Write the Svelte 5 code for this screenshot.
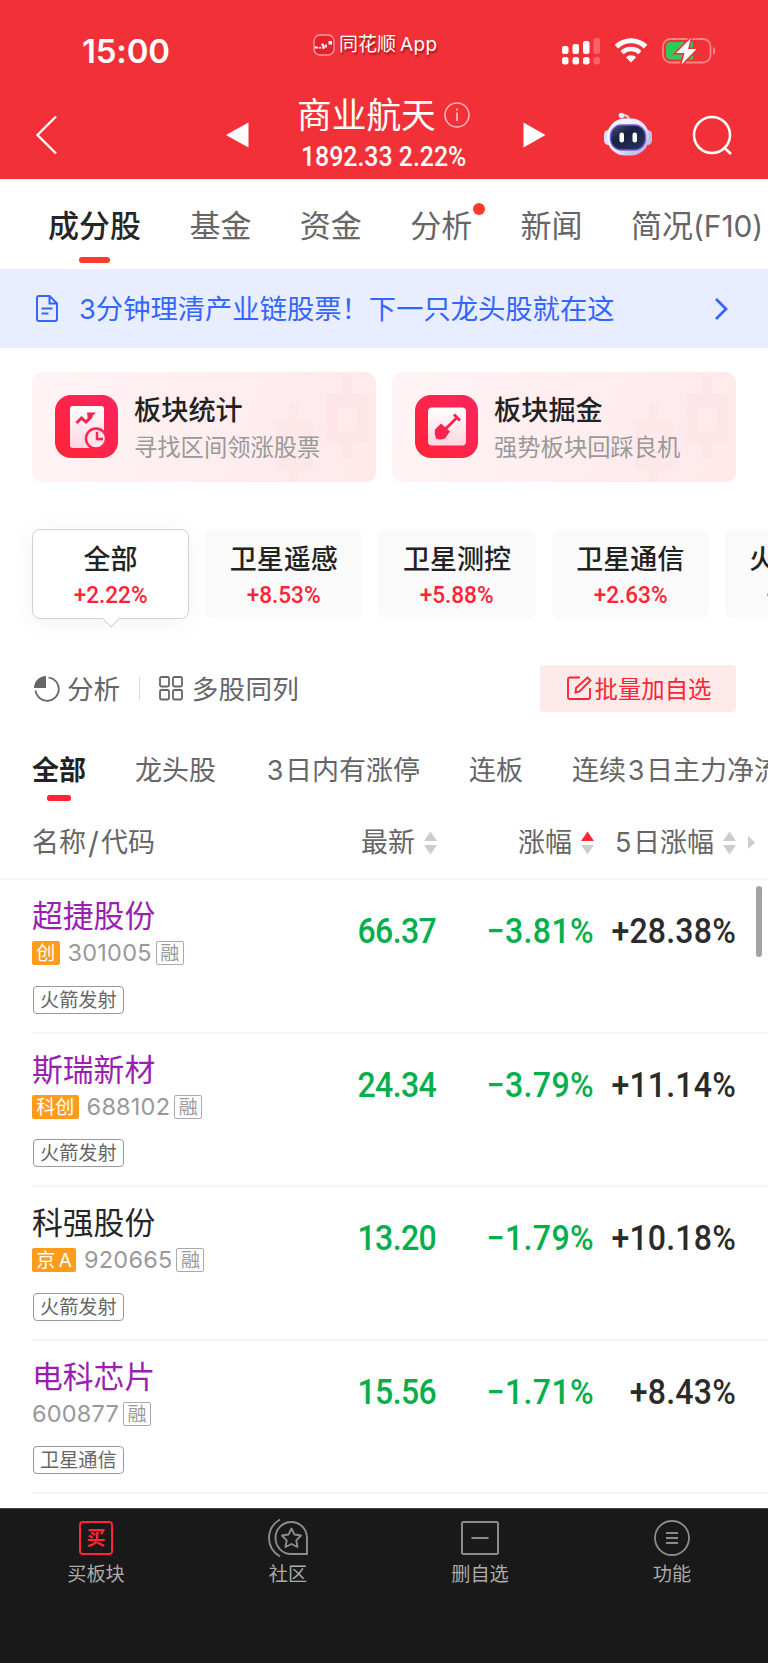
<script>
    const tabs = [
        { label: '成分股', active: true },
        { label: '基金' },
        { label: '资金' },
        { label: '分析', dot: true },
        { label: '新闻' },
        { label: '简况', suffix: '(F10)' },
    ];

    const chips = [
        { name: '全部', change: '+2.22%' },
        { name: '卫星遥感', change: '+8.53%' },
        { name: '卫星测控', change: '+5.88%' },
        { name: '卫星通信', change: '+2.63%' },
        { name: '火箭发射', change: '+1.96%' },
    ];
    let activeChip = 0;

    const filters = ['全部', '龙头股', '3日内有涨停', '连板', '连续3日主力净流入'];
    let activeFilter = 0;

    // digits get some air around them when they sit between characters
    const splitDigits = s => s.split(/(\d)/).filter(Boolean);

    const columns = [
        { label: '最新', cls: 'last' },
        { label: '涨幅', cls: 'pct', sort: 'asc' },
        { label: '5日涨幅', cls: 'five' },
    ];

    const stocks = [
        { name: '超捷股份', seen: true, board: '创', code: '301005', tag: '火箭发射', last: '66.37', pct: '−3.81%', five: '+28.38%' },
        { name: '斯瑞新材', seen: true, board: '科创', code: '688102', tag: '火箭发射', last: '24.34', pct: '−3.79%', five: '+11.14%' },
        { name: '科强股份', seen: false, board: '京 A', code: '920665', tag: '火箭发射', last: '13.20', pct: '−1.79%', five: '+10.18%' },
        { name: '电科芯片', seen: true, board: '', code: '600877', tag: '卫星通信', last: '15.56', pct: '−1.71%', five: '+8.43%' },
    ];
</script>

<div class="page">
    <header>
        <div class="status">
            <div class="clock">15:00</div>
            <div class="brand">
                <svg width="22" height="22" viewBox="0 0 22 22">
                    <rect x="1" y="1" width="20" height="20" rx="6" fill="#e5222b" stroke="#ff9a9d" stroke-width="1.3" />
                    <path d="M1.500 13.500h3.500M6 14l2-.5M8.500 11l2-1M13 10.500v3M10.500 12v3" fill="none" stroke="#fff" stroke-width="1.800" />
                    <path d="M15.500 7h3.500v3.500h-3.500zM9.500 11h2v3h-2z" fill="#fff" />
                </svg>
                <span>同花顺<b>App</b></span>
            </div>
            <svg class="signal" width="39" height="28" viewBox="0 0 39 28" fill="#fff">
                <rect x="0" y="9" width="6.500" height="8" rx="2" />
                <rect x="10.500" y="7" width="6.500" height="10" rx="2" />
                <rect x="21" y="4" width="6.500" height="13" rx="2" />
                <rect x="31.500" y="1" width="6.500" height="16" rx="2" opacity=".25" />
                <rect x="0" y="20" width="6.500" height="7.500" rx="2.500" />
                <rect x="10.500" y="20" width="6.500" height="7.500" rx="2.500" />
                <rect x="21" y="20" width="6.500" height="7.500" rx="2.500" />
                <rect x="31.500" y="20" width="6.500" height="7.500" rx="2.500" opacity=".25" />
            </svg>
            <svg class="wifi" width="34" height="26" viewBox="0 0 34 26">
                <path d="M2.400 8.600a21 21 0 0 1 29.200 0" fill="none" stroke="#fff" stroke-width="5" />
                <path d="M8 14.600a13 13 0 0 1 18 0" fill="none" stroke="#fff" stroke-width="4.300" />
                <path d="M11.800 19.300a7.600 7.600 0 0 1 10.400 0L17 24.600z" fill="#fff" />
            </svg>
            <svg class="battery" width="55" height="28" viewBox="0 0 55 28">
                <rect x="1" y="2" width="47.500" height="23.500" rx="7.500" fill="none" stroke="#f98589" stroke-width="1.800" />
                <path d="M51 10c3 1 3 7 0 8z" fill="#f98589" />
                <path d="M9 5h22v17.500H9q-5 0-5-5V10q0-5 5-5z" fill="#34c759" />
                <path d="M29 1L14 16h8.500l-3 11.500L34.500 12H26z" fill="#fff" stroke="#f23037" stroke-width="3" paint-order="stroke" />
            </svg>
        </div>

        <div class="titlebar">
            <svg class="back" width="24" height="42" viewBox="0 0 24 42"><path d="M21 2.500L2.500 21 21 39.500" fill="none" stroke="#fff" stroke-width="2.300" /></svg>
            <svg class="prev" width="23" height="26" viewBox="0 0 23 26"><path d="M0 13L22.500 .5v25z" fill="#fff" /></svg>
            <div class="title">
                <h1>商业航天
                    <svg width="26" height="26" viewBox="0 0 26 26" fill="none" stroke="#ffb3b5" stroke-width="1.600">
                        <circle cx="13" cy="13" r="12" />
                        <path d="M13 10.500V19M13 6.500v2" stroke-width="1.900" />
                    </svg>
                </h1>
                <p>1892.33 2.22%</p>
            </div>
            <svg class="next" width="23" height="26" viewBox="0 0 23 26"><path d="M22.500 13L.5 .5v25z" fill="#fff" /></svg>
            <svg class="robot" width="48" height="44" viewBox="0 0 48 44">
                <defs>
                    <linearGradient id="shell" x1="0" y1="0" x2="1" y2="1">
                        <stop offset="0" stop-color="#fff" />
                        <stop offset=".55" stop-color="#e6e5fa" />
                        <stop offset="1" stop-color="#aaa5dc" />
                    </linearGradient>
                    <linearGradient id="visor" x1="0" y1="0" x2="1" y2="1">
                        <stop offset="0" stop-color="#42516e" />
                        <stop offset=".4" stop-color="#18213f" />
                        <stop offset="1" stop-color="#28345e" />
                    </linearGradient>
                </defs>
                <path d="M18 3.500q6-1 7 4" fill="none" stroke="#d7dcf5" stroke-width="2" />
                <circle cx="17.500" cy="3.500" r="2.800" fill="#e4ecff" />
                <rect x="0" y="18" width="9" height="15" rx="4.500" fill="#dedff5" />
                <rect x="39" y="18" width="9" height="15" rx="4.500" fill="#bfbfe8" />
                <rect x="3" y="6.500" width="42" height="37" rx="18" fill="url(#shell)" />
                <rect x="6.500" y="13" width="35" height="25" rx="11" fill="url(#visor)" stroke="#7359df" stroke-width="1.300" />
                <rect x="15.500" y="20.500" width="4.500" height="10" rx="2.200" fill="#fff" />
                <rect x="28.500" y="20.500" width="4.500" height="10" rx="2.200" fill="#fff" />
            </svg>
            <svg class="search" width="41" height="41" viewBox="0 0 41 41" fill="none" stroke="#fff" stroke-width="2.600">
                <circle cx="20" cy="20" r="18" />
                <path d="M31.500 32l7.500 7" />
            </svg>
        </div>
    </header>

    <nav class="tabs">
        {#each tabs as tab}
            <span class="tab" class:active={tab.active}>{tab.label}{#if tab.suffix}<i>{tab.suffix}</i>{/if}{#if tab.dot}<em></em>{/if}</span>
        {/each}
    </nav>

    <div class="banner">
        <svg width="22" height="27" viewBox="0 0 22 27" fill="none" stroke="#3366ff" stroke-width="2">
            <path d="M3 1h10.500L21 8.500V24q0 2-2 2H3q-2 0-2-2V3q0-2 2-2zM13.500 1v7.500H21M5.500 13.500h11M5.500 18.500h7" />
        </svg>
        <span>3分钟理清产业链股票！下一只龙头股就在这</span>
        <svg class="arrow" width="15" height="24" viewBox="0 0 15 24"><path d="M2 2l10 10L2 22" fill="none" stroke="#3366ff" stroke-width="2.800" /></svg>
    </div>

    <div class="cards">
        {#each ['统计', '掘金'] as kind, i}
            <div class="card">
                <svg class="candles" width="104" height="110" viewBox="0 0 104 110" fill="#fcdadd">
                    <path d="M70 4h10v18h16v48H80v16H70V70H55V22h15zM66 36v23h19V36z" fill-rule="evenodd" opacity=".32" />
                    <path d="M17 31h10v17h14v49H27v13H17V97H3V48h14zM13 62v22h18V62z" fill-rule="evenodd" opacity=".2" />
                </svg>
                <svg class="badge" width="64" height="64" viewBox="0 0 64 64">
                    <defs>
                        <linearGradient id="red{i}" x1="1" y1="0" x2="0" y2="1">
                            <stop offset="0" stop-color="#fa2460" />
                            <stop offset="1" stop-color="#ff2436" />
                        </linearGradient>
                        <linearGradient id="paper{i}" x1="0" y1="0" x2="0" y2="1">
                            <stop offset="0" stop-color="#fff" />
                            <stop offset="1" stop-color="#ffd6df" />
                        </linearGradient>
                    </defs>
                    <rect width="63" height="63" rx="16" fill="url(#red{i})" />
                    {#if i === 0}
                        <rect x="15" y="11" width="34" height="42" rx="3" fill="url(#paper{i})" />
                        <path d="M21.500 28l5-5 4.500 4 6-6" fill="none" stroke="#fa2450" stroke-width="3" />
                        <path d="M32 17.500h9l-8 8z" fill="#fa2450" />
                        <circle cx="41" cy="43.500" r="10" fill="#ffe4ea" stroke="#fb2750" stroke-width="2.400" />
                        <path d="M42 37v7h6" fill="none" stroke="#fb2750" stroke-width="2.400" />
                    {:else}
                        <rect x="13" y="12.500" width="38" height="38" rx="4" fill="url(#paper{i})" />
                        <path d="M31 33.500l11-11M39 19.500l6 6" fill="none" stroke="#fa2450" stroke-width="3" />
                        <path d="M26 28.500l9 8-5 7q-5 2-9 0-2-4-1-9z" fill="#fa2450" />
                    {/if}
                </svg>
                <div>
                    <h2>板块{kind}</h2>
                    <p>{i === 0 ? '寻找区间领涨股票' : '强势板块回踩良机'}</p>
                </div>
            </div>
        {/each}
    </div>

    <div class="chips">
        {#each chips as chip, i}
            <div class="chip" class:selected={i === activeChip} on:click={() => activeChip = i} role="presentation">
                <strong>{chip.name}</strong>
                <span>{chip.change}</span>
            </div>
        {/each}
    </div>

    <div class="tools">
        <svg width="26" height="26" viewBox="0 0 26 26">
            <path d="M12 0v12H0A12 12 0 0 1 12 0z" fill="#666" />
            <path d="M14.500 1.500a11.700 11.700 0 1 1-13 13" fill="none" stroke="#666" stroke-width="1.700" />
        </svg>
        <span class="t1">分析</span>
        <i></i>
        <svg width="24" height="25" viewBox="0 0 24 25" fill="none" stroke="#666" stroke-width="1.800">
            <rect x="1" y="1" width="9" height="9.500" rx="1.500" />
            <rect x="14" y="1" width="9" height="9.500" rx="1.500" />
            <rect x="1" y="14" width="9" height="9.500" rx="1.500" />
            <rect x="14" y="14" width="9" height="9.500" rx="1.500" />
        </svg>
        <span class="t2">多股同列</span>
        <button>
            <svg width="25" height="25" viewBox="0 0 25 25" fill="none" stroke="#ff2436" stroke-width="1.900">
                <path d="M13 1.500H3q-2 0-2 2V21q0 2 2 2h18q2 0 2-2v-9" />
                <path d="M8.500 16.500l.5-4.500L20.500 1.500l3 3L12.500 15.500z" />
            </svg><span>批量加自选</span>
        </button>
    </div>

    <div class="filters">
        {#each filters as filter, i}
            <span class:active={i === activeFilter} on:click={() => activeFilter = i} role="presentation">{#each splitDigits(filter) as part}{#if /\d/.test(part)}<b>{part}</b>{:else}{part}{/if}{/each}</span>
        {/each}
    </div>

    <div class="thead">
        <span class="name">名称<i>/</i>代码</span>
        {#each columns as col}
            <span class={col.cls}>{#each splitDigits(col.label) as part}{#if /\d/.test(part)}<b>{part}</b>{:else}{part}{/if}{/each}
                <svg width="13" height="24" viewBox="0 0 13 24" fill="#ccc">
                    <path class:up={col.sort === 'asc'} d="M6.500 .5L13 10H0z" />
                    <path d="M6.500 23.500L0 14h13z" />
                </svg>
            </span>
        {/each}
        <svg class="more" width="7" height="13" viewBox="0 0 7 13"><path d="M0 0l7 6.500L0 13z" fill="#ccc" /></svg>
    </div>

    <div class="list">
        {#each stocks as stock (stock.code)}
            <div class="row">
                <div class="name">
                    <div class="title" class:seen={stock.seen}>{stock.name}</div>
                    <div class="meta">
                        {#if stock.board}<span class="board">{stock.board}</span>{/if}
                        <span class="code">{stock.code}</span>
                        <span class="margin">融</span>
                    </div>
                    <span class="tag">{stock.tag}</span>
                </div>
                <span class="num last">{stock.last}</span>
                <span class="num pct">{stock.pct}</span>
                <span class="num five">{stock.five}</span>
            </div>
        {/each}
        <div class="scrollbar"></div>
    </div>

    <footer>
        <div>
            <svg width="40" height="40" viewBox="0 0 40 40">
                <rect x="4" y="4" width="32" height="32" rx="3" fill="none" stroke="#ff2436" stroke-width="2" />
                <text x="20" y="27" text-anchor="middle" fill="#ff2436">买</text>
            </svg>
            买板块
        </div>
        <div>
            <svg width="40" height="40" viewBox="0 0 40 40" fill="none" stroke="#8c8c8c" stroke-width="1.900">
                <path d="M23 4A15.500 16 0 0 0 23 36h16V20A15.500 16 0 0 0 23 4z" />
                <path d="M12 1.500Q1 8 1 20t11 18.500" />
                <path d="M23.500 10.500l3 6 6.500 1-4.700 4.800 1.200 6.700-6-3-6 3 1.200-6.700-4.700-4.800 6.500-1z" stroke-linejoin="round" />
            </svg>
            社区
        </div>
        <div>
            <svg width="40" height="40" viewBox="0 0 40 40" fill="none" stroke="#8c8c8c" stroke-width="2">
                <rect x="2" y="4" width="36" height="32" rx="1.500" />
                <path d="M11.500 20h17" />
            </svg>
            删自选
        </div>
        <div>
            <svg width="40" height="40" viewBox="0 0 40 40" fill="none" stroke="#8c8c8c" stroke-width="1.800">
                <circle cx="20" cy="20" r="17" />
                <path d="M14 15h12M14 20h12M14 25h12" />
            </svg>
            功能
        </div>
    </footer>
</div>

<style>
    :global(body) {
        background: #fff;
    }

    .page {
        width: 768px;
        height: 1663px;
        overflow: hidden;
        display: flex;
        flex-direction: column;
        font-family: Inter, "Noto Sans CJK SC", sans-serif;
        color: #666;
        white-space: nowrap;
    }

    svg {
        display: block;
        flex: none;
    }

    h1, h2, p {
        margin: 0;
        font-weight: 400;
    }

    b, i, em {
        font-weight: inherit;
        font-style: normal;
    }

    header {
        height: 179px;
        flex: none;
        background: #f23037;
        color: #fff;
    }

    .status {
        position: relative;
        height: 90px;
        display: flex;
        align-items: flex-start;
        padding-left: 82px;
    }

    .clock {
        width: 480px;
        margin-top: 31px;
        font-size: 33px;
        line-height: 41px;
        font-weight: 600;
        letter-spacing: -0.2px;
    }

    .brand {
        position: absolute;
        left: 313px;
        top: 32px;
        display: flex;
        align-items: center;
        gap: 4px;
        font-size: 19px;
        line-height: 24px;
        text-shadow: 1px 2px 2px rgba(90, 0, 0, 0.6);
    }

    .brand span {
        padding-top: 1px;
    }

    .brand b {
        margin-left: 4px;
        letter-spacing: 0.4px;
    }

    .signal {
        margin-top: 37px;
    }

    .wifi {
        margin: 38px 0 0 13px;
    }

    .battery {
        margin: 37px 0 0 14px;
    }

    .titlebar {
        height: 89px;
        display: flex;
        align-items: flex-start;
    }

    .back { margin: 24px 0 0 35px; }
    .prev { margin: 32px 0 0 167px; }
    .next { margin: 32px 0 0 22px; }
    .robot { margin: 22px 0 0 58px; }
    .search { margin: 25px 0 0 40px; }

    .titlebar .title {
        width: 204px;
        margin-left: 48px;
    }

    h1 {
        display: flex;
        align-items: center;
        gap: 8px;
        font-size: 34.7px;
        line-height: 50px;
    }

    .title p {
        width: max-content;
        margin-top: -1px;
        padding-left: 4px;
        font: 500 27px/36px Roboto, sans-serif;
        transform: scaleX(0.92);
        transform-origin: 4px 50%;
    }

    .tabs {
        height: 90px;
        flex: none;
        display: flex;
        gap: 48.4px;
        padding-left: 48px;
        font-size: 31px;
        line-height: 92px;
        border-top: 1px solid #eef4f7;
        box-sizing: border-box;
    }

    .tab {
        position: relative;
    }

    .tab i {
        font-size: 29.8px;
    }

    .tab em {
        position: absolute;
        right: -12.5px;
        top: 23px;
        width: 12px;
        height: 12px;
        border-radius: 50%;
        background: #ff3b30;
    }

    .tab.active {
        color: #262626;
        font-weight: 500;
    }

    .tab.active::after {
        content: "";
        position: absolute;
        left: 31px;
        top: 77px;
        width: 31px;
        height: 6px;
        border-radius: 3px;
        background: #ff3b30;
    }

    .banner {
        height: 79px;
        flex: none;
        display: flex;
        align-items: center;
        padding: 0 39px 0 36px;
        background: #e8eeff;
        color: #3366ff;
        font-size: 27.3px;
    }

    .banner span {
        margin-left: 21px;
        padding-bottom: 3px;
    }

    .arrow {
        margin-left: auto;
    }

    .cards {
        display: flex;
        gap: 16px;
        padding: 24px 32px 0;
    }

    .card {
        position: relative;
        flex: 1;
        height: 110px;
        display: flex;
        align-items: center;
        border-radius: 10px;
        overflow: hidden;
        background: linear-gradient(110deg, #fff4f5, #fee8ea);
    }

    .candles {
        position: absolute;
        right: 0;
        top: 0;
    }

    .badge {
        margin: 0 15px 0 23px;
    }

    .card div {
        position: relative;
        padding-top: 3px;
    }

    h2 {
        font-size: 27.2px;
        line-height: 38px;
        font-weight: 500;
        color: #222;
    }

    .card p {
        font-size: 23.3px;
        line-height: 36px;
        color: #999;
    }

    .chips {
        display: flex;
        gap: 16px;
        padding: 47px 0 0 32px;
    }

    .chip {
        position: relative;
        flex: none;
        width: 157.2px;
        height: 90px;
        box-sizing: border-box;
        padding-top: 13px;
        border-radius: 8px;
        background: #fafafa;
        text-align: center;
    }

    .chip strong {
        display: block;
        font-size: 27px;
        line-height: 36px;
        font-weight: 500;
        color: #222;
    }

    .chip span {
        display: block;
        font: 500 24px/34px Roboto, sans-serif;
        transform: scaleX(0.94);
        color: #ff2436;
    }

    .chip.selected {
        padding-top: 12px;
        background: #fff;
        border: 1px solid #d2d2d2;
        box-shadow: 0 4px 24px rgba(0, 0, 0, 0.05);
    }

    .chip.selected::after {
        content: "";
        position: absolute;
        left: 72px;
        bottom: -6.5px;
        width: 11px;
        height: 11px;
        background: #fff;
        border: solid #d2d2d2;
        border-width: 0 1px 1px 0;
        transform: rotate(45deg);
    }

    .tools {
        display: flex;
        align-items: center;
        height: 47px;
        margin: 46px 32px 0 34px;
        font-size: 26.6px;
    }

    .tools span {
        padding-bottom: 2px;
    }

    .tools i {
        width: 1px;
        height: 24px;
        margin: 0 19px;
        background: #ddd;
    }

    .t1 { margin-left: 7px; }
    .t2 { margin-left: 8.5px; letter-spacing: 0.3px; }

    .tools button {
        display: flex;
        align-items: center;
        justify-content: center;
        gap: 3px;
        width: 196px;
        height: 47px;
        margin-left: auto;
        padding: 0 0 0 2px;
        border: 0;
        border-radius: 4px;
        background: #fee9eb;
        color: #ff2436;
        font: inherit;
        font-size: 23.4px;
    }

    .filters {
        display: flex;
        gap: 49px;
        height: 94px;
        padding-left: 32px;
        font-size: 27px;
        line-height: 117px;
    }

    .filters span {
        position: relative;
        flex: none;
    }

    .filters b {
        display: inline-block;
        width: 20px;
        text-align: center;
    }

    .filters .active {
        color: #222;
        font-weight: 600;
    }

    .filters .active::after {
        content: "";
        position: absolute;
        left: 15px;
        top: 83px;
        width: 24px;
        height: 6px;
        border-radius: 2.5px;
        background: #ff2436;
    }

    .thead {
        height: 74px;
        flex: none;
        display: flex;
        align-items: center;
        padding: 2px 0 0 32px;
        border-bottom: 2px solid #f5f5f5;
        box-sizing: border-box;
        font-size: 27px;
        line-height: 40px;
    }

    .thead span {
        display: flex;
        align-items: center;
        justify-content: flex-end;
    }

    .thead .name {
        justify-content: flex-start;
    }

    .thead i {
        width: 15px;
        text-align: center;
        font-size: 30px;
    }

    .thead b {
        width: 18px;
    }

    .thead span svg {
        margin-left: 9px;
        margin-top: -1px;
    }

    .up {
        fill: #ff2436;
    }

    .more {
        margin-left: 12px;
        margin-top: -1px;
    }

    .name { width: 230px; }
    .last { width: 175px; }
    .pct { width: 157px; }
    .five { width: 142px; }

    .list {
        position: relative;
        flex: 1;
    }

    .row {
        display: flex;
        height: 153.6px;
        margin-left: 32px;
        box-sizing: border-box;
        border-bottom: 2px solid #f5f5f5;
    }

    .row .title {
        padding-top: 16px;
        font-size: 30.8px;
        line-height: 40px;
        color: #262626;
    }

    .row .seen {
        color: #9a1eb0;
    }

    .meta {
        display: flex;
        align-items: center;
        height: 24px;
        margin-top: 5px;
    }

    .board {
        height: 24px;
        padding: 0 4.300px;
        margin-right: 8px;
        border-radius: 2px;
        background: #ff9c1c;
        color: #fff;
        font-size: 19px;
        line-height: 25px;
        word-spacing: -2px;
    }

    .code {
        font-size: 23.5px;
        line-height: 24px;
        letter-spacing: 0.2px;
        color: #999;
    }

    .margin {
        width: 26px;
        height: 22px;
        margin-left: 4px;
        border: 1px solid #aaa;
        border-radius: 2px;
        text-align: center;
        font-size: 19px;
        line-height: 23px;
        color: #999;
    }

    .tag {
        display: inline-block;
        height: 26px;
        margin: 20.5px 0 0 1px;
        padding: 0 6px;
        border: 1px solid #999;
        border-radius: 4px;
        font-size: 19.2px;
        line-height: 26px;
    }

    .num {
        box-sizing: border-box;
        padding-top: 32px;
        text-align: right;
        font: 500 34.5px/38px Roboto, sans-serif;
        letter-spacing: 0.4px;
        transform: scaleX(0.93);
        transform-origin: 100% 50%;
        color: #07ae4c;
    }

    .num.last {
        letter-spacing: -0.7px;
        padding-right: 1px;
    }

    .num.five {
        letter-spacing: 0.2px;
        color: #2b2b2b;
    }

    .scrollbar {
        position: absolute;
        right: 6px;
        top: 6px;
        width: 6px;
        height: 71px;
        border-radius: 3px;
        background: #a3a3a3;
    }

    footer {
        height: 155px;
        flex: none;
        display: flex;
        background: #191919;
        border-top: 1px solid #444;
        box-sizing: border-box;
        z-index: 1;
    }

    footer div {
        flex: 1;
        display: flex;
        flex-direction: column;
        align-items: center;
        padding-top: 9px;
        font-size: 19.2px;
        line-height: 32px;
        color: #aaa;
    }

    footer text {
        font-size: 19px;
        font-weight: 700;
    }
</style>
